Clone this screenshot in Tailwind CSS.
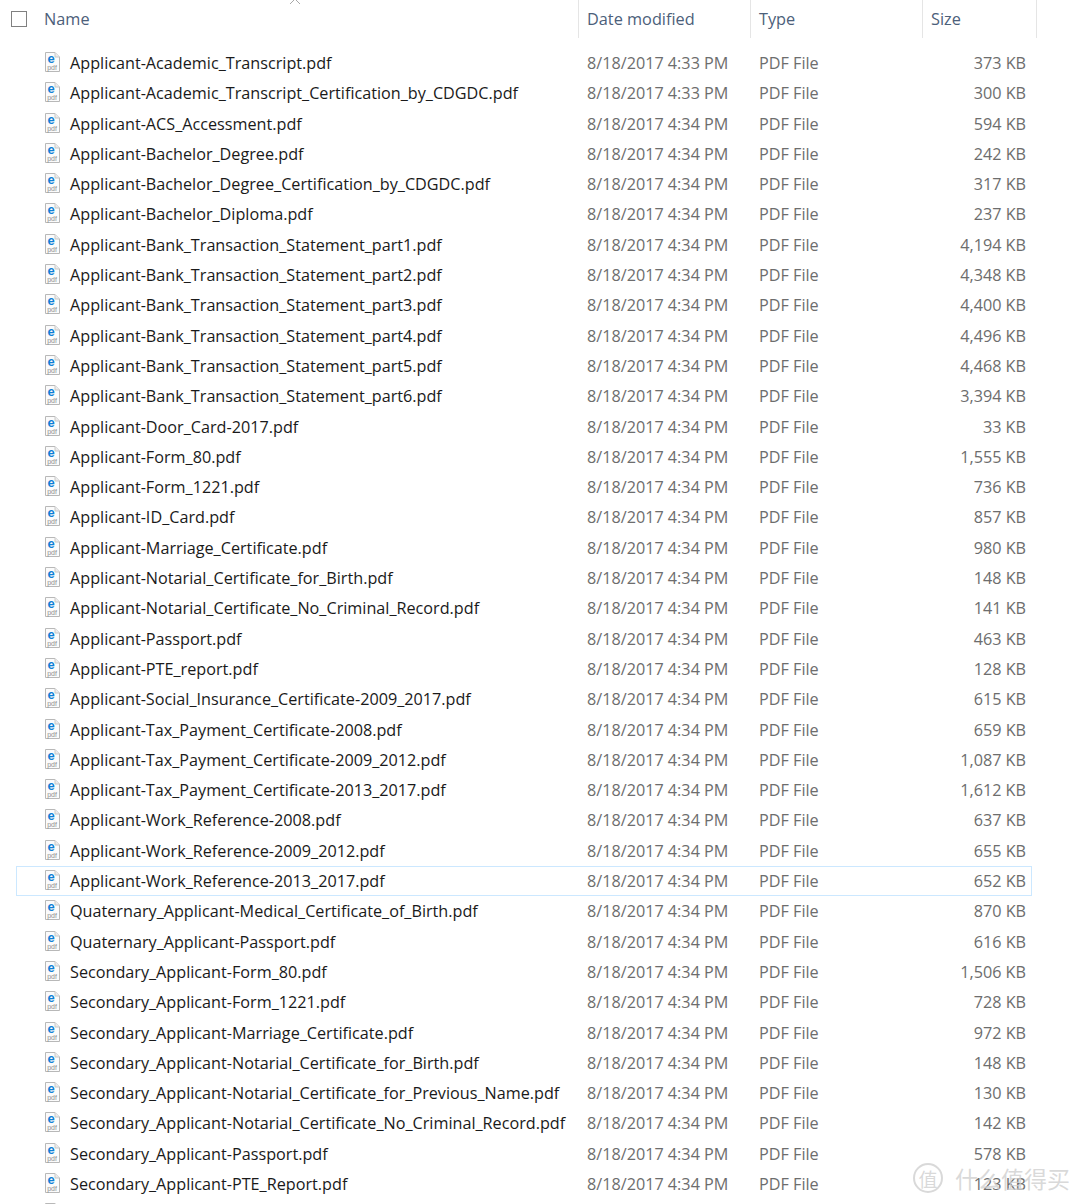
<!DOCTYPE html>
<html lang="en">
<head>
  <meta charset="UTF-8">
  <title>Files</title>
  <script src="https://cdn.jsdelivr.net/npm/@tailwindcss/browser@4"></script>
</head>
<body class="bg-white h-[1204px] overflow-hidden relative font-['Open_Sans','Noto_Sans',sans-serif] text-[16.2px]">
  <!-- sort arrow -->
  <svg class="absolute left-[289px] top-0" width="12" height="5" viewBox="0 0 12 5" fill="none" stroke="#a9a9a9" stroke-width="1"><path d="M1 4 L6 -1 L11 4"/></svg>

  <!-- header -->
  <div class="grid grid-cols-[578px_172px_172px_115px] h-[38px] text-[16.3px] text-[#4c607a] mb-[10px]">
    <div class="flex items-center">
      <span class="block w-4 h-4 border border-[#808080] ml-[11px] mr-[17px]"></span>
      <span>Name</span>
    </div>
    <div class="flex items-center border-l border-[#e5e5e5] pl-[8px]">Date modified</div>
    <div class="flex items-center border-l border-[#e5e5e5] pl-[8px]">Type</div>
    <div class="flex items-center border-x border-[#e5e5e5] pl-[8px]">Size</div>
  </div>

  <div id="rows"></div>

  <!-- watermark -->
  <div class="absolute left-[913px] top-[1163px] flex items-center gap-[12px] whitespace-nowrap text-[#cfcfcf]/80 font-['Noto_Sans_CJK_SC',sans-serif]">
    <span class="flex items-center justify-center w-[30px] h-[30px] rounded-full border-2 border-[#cfcfcf]/80 text-[19px] leading-none">值</span>
    <span class="text-[23px] leading-none">什么值得买</span>
  </div>

  <script>
    const files = [
      ["Applicant-Academic_Transcript.pdf", "4:33", "373"],
      ["Applicant-Academic_Transcript_Certification_by_CDGDC.pdf", "4:33", "300"],
      ["Applicant-ACS_Accessment.pdf", "4:34", "594"],
      ["Applicant-Bachelor_Degree.pdf", "4:34", "242"],
      ["Applicant-Bachelor_Degree_Certification_by_CDGDC.pdf", "4:34", "317"],
      ["Applicant-Bachelor_Diploma.pdf", "4:34", "237"],
      ["Applicant-Bank_Transaction_Statement_part1.pdf", "4:34", "4,194"],
      ["Applicant-Bank_Transaction_Statement_part2.pdf", "4:34", "4,348"],
      ["Applicant-Bank_Transaction_Statement_part3.pdf", "4:34", "4,400"],
      ["Applicant-Bank_Transaction_Statement_part4.pdf", "4:34", "4,496"],
      ["Applicant-Bank_Transaction_Statement_part5.pdf", "4:34", "4,468"],
      ["Applicant-Bank_Transaction_Statement_part6.pdf", "4:34", "3,394"],
      ["Applicant-Door_Card-2017.pdf", "4:34", "33"],
      ["Applicant-Form_80.pdf", "4:34", "1,555"],
      ["Applicant-Form_1221.pdf", "4:34", "736"],
      ["Applicant-ID_Card.pdf", "4:34", "857"],
      ["Applicant-Marriage_Certificate.pdf", "4:34", "980"],
      ["Applicant-Notarial_Certificate_for_Birth.pdf", "4:34", "148"],
      ["Applicant-Notarial_Certificate_No_Criminal_Record.pdf", "4:34", "141"],
      ["Applicant-Passport.pdf", "4:34", "463"],
      ["Applicant-PTE_report.pdf", "4:34", "128"],
      ["Applicant-Social_Insurance_Certificate-2009_2017.pdf", "4:34", "615"],
      ["Applicant-Tax_Payment_Certificate-2008.pdf", "4:34", "659"],
      ["Applicant-Tax_Payment_Certificate-2009_2012.pdf", "4:34", "1,087"],
      ["Applicant-Tax_Payment_Certificate-2013_2017.pdf", "4:34", "1,612"],
      ["Applicant-Work_Reference-2008.pdf", "4:34", "637"],
      ["Applicant-Work_Reference-2009_2012.pdf", "4:34", "655"],
      ["Applicant-Work_Reference-2013_2017.pdf", "4:34", "652"],
      ["Quaternary_Applicant-Medical_Certificate_of_Birth.pdf", "4:34", "870"],
      ["Quaternary_Applicant-Passport.pdf", "4:34", "616"],
      ["Secondary_Applicant-Form_80.pdf", "4:34", "1,506"],
      ["Secondary_Applicant-Form_1221.pdf", "4:34", "728"],
      ["Secondary_Applicant-Marriage_Certificate.pdf", "4:34", "972"],
      ["Secondary_Applicant-Notarial_Certificate_for_Birth.pdf", "4:34", "148"],
      ["Secondary_Applicant-Notarial_Certificate_for_Previous_Name.pdf", "4:34", "130"],
      ["Secondary_Applicant-Notarial_Certificate_No_Criminal_Record.pdf", "4:34", "142"],
      ["Secondary_Applicant-Passport.pdf", "4:34", "578"],
      ["Secondary_Applicant-PTE_Report.pdf", "4:34", "123"],
    ];

    const icon = `<svg class="absolute left-[27px] top-[3px]" width="16" height="20" viewBox="0 0 16 20">
      <path d="M1.5 .5 H11 L15.5 5 V19.5 H1.5 Z" fill="#fbfbfb" stroke="#b8b8b8"/>
      <path d="M11 .5 V5 H15.5" fill="#ececec" stroke="#c8c8c8"/>
      <text x="7" y="10.5" text-anchor="middle" font-family="Liberation Sans" font-weight="700" font-size="13" fill="#0f7fd6">e</text>
      <text x="8" y="17.5" text-anchor="middle" font-family="Liberation Sans" font-size="7" fill="#8f8f8f">pdf</text>
    </svg>`;

    const rows = files.map(([name, time, size], i) => {
      const border = i === 27 ? "border-[#cce8ff]" : "border-transparent";
      return `<div class="relative grid grid-cols-[570px_172px_172px_95px] items-center h-[30.3px] w-[1016px] ml-4 border ${border}">
        ${icon}
        <div class="pl-[53px] text-[#1a1a1a] whitespace-nowrap">${name}</div>
        <div class="text-[#6d6d6d]">8/18/2017 ${time} PM</div>
        <div class="text-[#6d6d6d]">PDF File</div>
        <div class="text-[#6d6d6d] text-right">${size} KB</div>
      </div>`;
    });
    // next row is cut off by the window, only its icon shows
    rows.push(`<div class="relative h-[30.3px] w-[1016px] ml-4 border border-transparent">${icon}</div>`);
    document.getElementById("rows").innerHTML = rows.join("");
  </script>
</body>
</html>
